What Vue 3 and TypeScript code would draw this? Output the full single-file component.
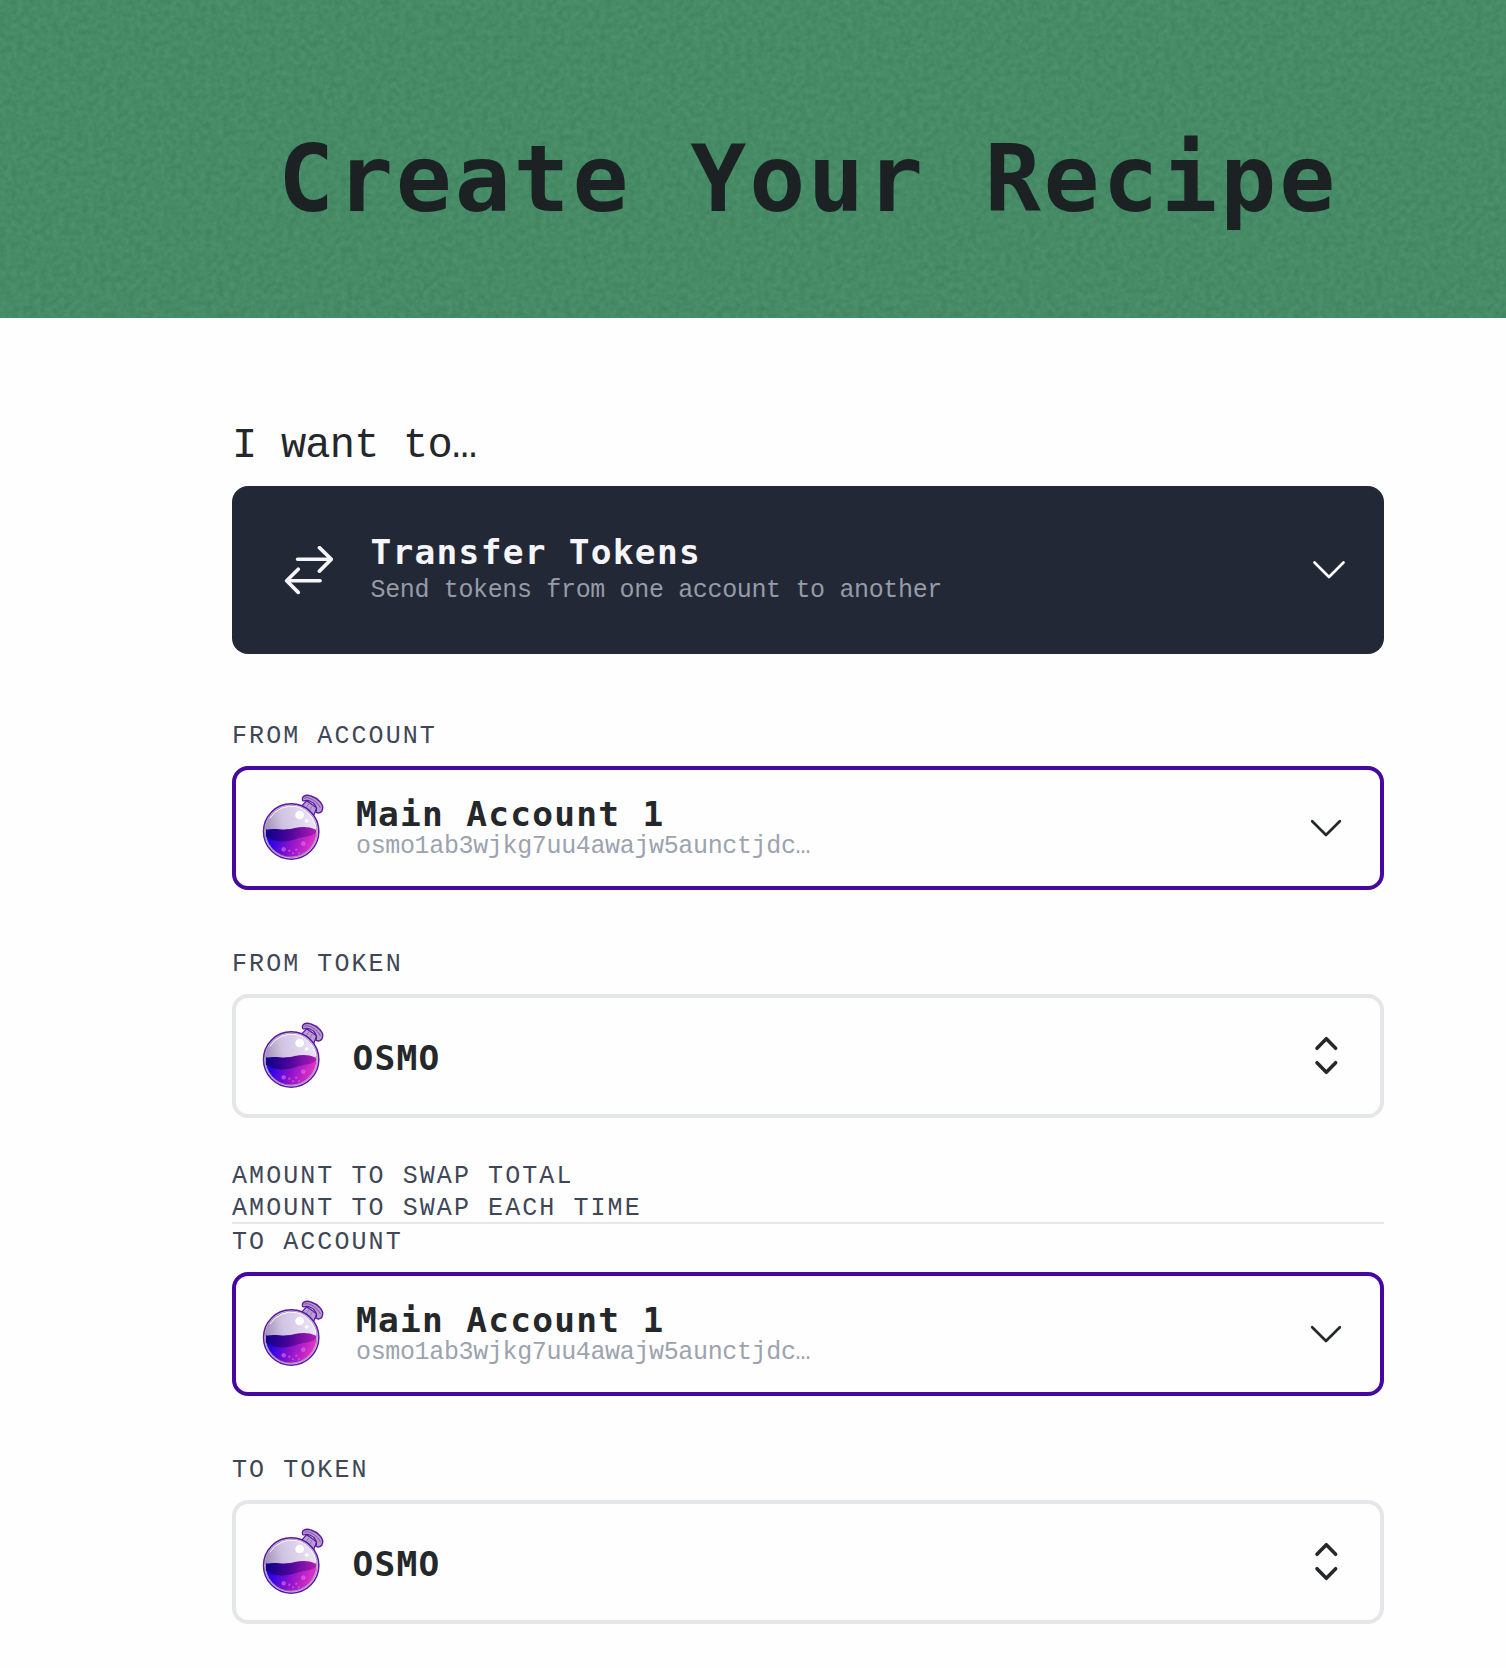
<script setup lang="ts">
interface Field {
  label: string
  kind: 'account' | 'token'
  name: string
  address?: string
}

const account = { kind: 'account' as const, name: 'Main Account 1', address: 'osmo1ab3wjkg7uu4awajw5aunctjdc…' }
const token = { kind: 'token' as const, name: 'OSMO' }

const fromFields: Field[] = [
  { label: 'From Account', ...account },
  { label: 'From Token', ...token },
]
const toFields: Field[] = [
  { label: 'To Account', ...account },
  { label: 'To Token', ...token },
]
const groups = [fromFields, toFields]
</script>

<template>
  <div class="page">
    <header class="banner">
      <svg class="grain" width="100%" height="100%" aria-hidden="true">
        <filter id="grain" x="0" y="0" width="100%" height="100%" color-interpolation-filters="sRGB">
          <feTurbulence type="fractalNoise" baseFrequency="0.17" numOctaves="2" seed="4" stitchTiles="stitch" />
          <feColorMatrix values="0.07 0 0 0 0.236  0.08 0 0 0 0.504  0.07 0 0 0 0.362  0 0 0 0 1" />
        </filter>
        <rect width="100%" height="100%" filter="url(#grain)" />
      </svg>
      <h1 class="title">Create Your Recipe</h1>
    </header>

    <svg class="defs" width="0" height="0" aria-hidden="true">
      <defs>
        <linearGradient id="glass" x1="0" y1="0.5" x2="1" y2="0.3">
          <stop offset="0" stop-color="#9c8fb4" />
          <stop offset="0.35" stop-color="#cfc3e2" />
          <stop offset="1" stop-color="#eee6f8" />
        </linearGradient>
        <linearGradient id="wave" x1="0" y1="0" x2="1" y2="0">
          <stop offset="0" stop-color="#0d0089" />
          <stop offset="0.45" stop-color="#4a0499" />
          <stop offset="1" stop-color="#b01cb4" />
        </linearGradient>
        <linearGradient id="liquid" x1="0" y1="0.35" x2="1" y2="0.5">
          <stop offset="0.05" stop-color="#1a00f0" />
          <stop offset="0.5" stop-color="#8a12cc" />
          <stop offset="1" stop-color="#ee35c4" />
        </linearGradient>
        <symbol id="flask" viewBox="120 242 195 210">
          <path d="M244 283 L260 265 L291 287 L281 309 Z" fill="#b6a0d2" stroke="#5c15a5" stroke-width="4" />
          <path d="M269 272 L256 289 M278 279 L268 296" stroke="#8d74b6" stroke-width="3" />
          <path d="M248 265 C244 252 257 245 273 251 C295 258 311 277 308 289 C307 301 294 305 287 299 C294 287 284 272 269 266 C259 262 254 267 248 265 Z" fill="#b59aca" stroke="#5c15a5" stroke-width="4" />
          <path d="M254 257 C267 251 294 270 301 286" fill="none" stroke="#7a3cac" stroke-width="2.5" />
          <circle cx="213.5" cy="357.5" r="83" fill="#d9cde6" stroke="#5c15a5" stroke-width="4.5" />
          <circle cx="213.5" cy="357.5" r="77.5" fill="url(#glass)" stroke="#a894b8" stroke-width="3.5" />
          <path d="M150 317 A75 75 0 0 1 288 345" fill="none" stroke="#fff" stroke-width="3" />
          <path d="M138 350 A76 76 0 0 0 213.5 433.5 A76 76 0 0 0 289 355 C264 357 242 376 205 376 C178 376 158 366 138 350 Z" fill="url(#liquid)" />
          <path d="M138 352 C164 347 180 352 200 351 C225 350 251 335 288 352 C292 374 251 371 235 378 C197 393 158 389 138 373 Z" fill="url(#wave)" />
          <circle cx="239" cy="308" r="13" fill="#fff" />
          <circle cx="260" cy="326" r="5.5" fill="#fff" />
          <g fill="#d05be0" fill-opacity="0.75">
            <circle cx="191" cy="411" r="5.5" stroke="#b77bea" stroke-width="1.5" />
            <circle cx="250" cy="394" r="5.5" stroke="#e57de2" stroke-width="1.5" />
            <circle cx="208" cy="415" r="3.5" />
            <circle cx="229" cy="412" r="3.5" />
            <circle cx="219" cy="423" r="3" />
            <circle cx="237" cy="422" r="3" />
          </g>
        </symbol>
      </defs>
    </svg>

    <main class="form">
      <h2 class="prompt">I want to…</h2>
      <button class="action" type="button">
        <svg class="swap" viewBox="193 407 148 148" aria-hidden="true">
          <path d="M234 447 H335 M300 412 L336 447 L300 483 M302 512 H202 M236 477 L201 512 L236 547" />
        </svg>
        <span class="action-text">
          <span class="name light">Transfer Tokens</span>
          <span class="sub">Send tokens from one account to another</span>
        </span>
        <svg class="chevron" viewBox="0 0 34 20" aria-hidden="true"><path d="M2.5 2.5 L17 17 L31.5 2.5" /></svg>
      </button>

      <template v-for="(fields, g) in groups" :key="g">
        <section v-for="field in fields" :key="field.label" class="field">
          <label class="label">{{ field.label }}</label>
          <button class="select" :class="field.kind" type="button">
            <svg class="flask" aria-hidden="true"><use href="#flask" /></svg>
            <span class="select-text">
              <span class="name">{{ field.name }}</span>
              <span v-if="field.address" class="sub">{{ field.address }}</span>
            </span>
            <svg v-if="field.kind === 'account'" class="chevron" viewBox="0 0 34 20" aria-hidden="true">
              <path d="M3.2 3.2 L17 17 L30.8 3.2" />
            </svg>
            <svg v-else class="updown" viewBox="100 168 81 123" aria-hidden="true">
              <path d="M112 205 L140 176 L168 205 M112 248 L140 277 L168 248" />
            </svg>
          </button>
        </section>
        <div v-if="g === 0" class="amounts">
          <label class="label">Amount to swap total</label>
          <label class="label">Amount to swap each time</label>
        </div>
      </template>
    </main>
  </div>
</template>

<style>
body {
  background: #fefefe;
}
</style>

<style scoped>
.page {
  min-height: 1668px;
  overflow: hidden;
  font-family: 'Liberation Mono', 'Courier New', monospace;
  color: #25282a;
}
.banner {
  position: relative;
  box-sizing: border-box;
  height: 318px;
  padding: 125px 0 0 278px;
  background: #468c66;
}
.grain {
  position: absolute;
  inset: 0;
}
.title {
  position: relative;
  margin: 0;
  font: bold 93px/108px 'DejaVu Sans Mono', monospace;
  letter-spacing: 2.9px;
  white-space: nowrap;
  color: #1c2223;
}
.defs {
  display: block;
}
.form {
  width: 1152px;
  margin: 0 0 0 232px;
  padding-top: 96px;
}
.prompt {
  margin: 0;
  height: 72px;
  font-size: 42px;
  font-weight: 400;
  line-height: 64px;
  letter-spacing: -0.76px;
}
button {
  display: flex;
  align-items: center;
  width: 100%;
  box-sizing: border-box;
  border: 0;
  border-radius: 16px;
  background: #fefefe;
  font: inherit;
  color: inherit;
  text-align: left;
}
.action {
  height: 168px;
  margin-bottom: 64px;
  padding: 0 38px 0 52px;
  background: #222835;
}
.swap {
  width: 49px;
  height: 49px;
  stroke: #f6f5f9;
  stroke-width: 11;
}
svg path {
  stroke-linecap: round;
  stroke-linejoin: round;
}
.swap,
.chevron,
.updown {
  fill: none;
  flex: none;
}
.action-text,
.select-text {
  display: flex;
  flex-direction: column;
  align-self: flex-start;
  flex: 1;
}
.action-text {
  padding: 46px 0 0 37.5px;
}
.name {
  font: bold 34.5px/36px 'DejaVu Sans Mono', monospace;
  letter-spacing: 1.26px;
}
.light {
  line-height: 40px;
  margin-bottom: 2px;
  color: #f6f5f9;
}
.sub {
  font-size: 25px;
  line-height: 30px;
  letter-spacing: -0.35px;
  color: #9ca3af;
}
.action .sub {
  line-height: 34px;
  color: #969ba7;
}
.chevron {
  width: 34px;
  height: 20px;
  stroke: #25282a;
  stroke-width: 2.7;
}
.action .chevron {
  stroke: #fff;
}
.field + .field {
  margin-top: 56px;
}
.label {
  display: block;
  height: 32px;
  font-size: 25px;
  line-height: 37px;
  letter-spacing: 2.07px;
  text-transform: uppercase;
  color: #3f4756;
}
.select {
  height: 124px;
  margin-top: 16px;
  padding: 0 37px 0 24px;
  border: 4px solid #e5e6ea;
}
.select.account {
  border-color: #4608a0;
}
.flask {
  width: 65px;
  height: 70px;
  flex: none;
}
.account .select-text {
  padding: 26px 0 0 31px;
}
.token .select-text {
  padding: 40px 0 0 27.5px;
}
.token .name {
  line-height: 40px;
}
.updown {
  width: 27px;
  height: 41px;
  margin-right: 3px;
  stroke: #25282a;
  stroke-width: 10.5;
}
.amounts {
  margin-top: 40px;
  border-bottom: 2px solid #e5e6ea;
}
</style>
